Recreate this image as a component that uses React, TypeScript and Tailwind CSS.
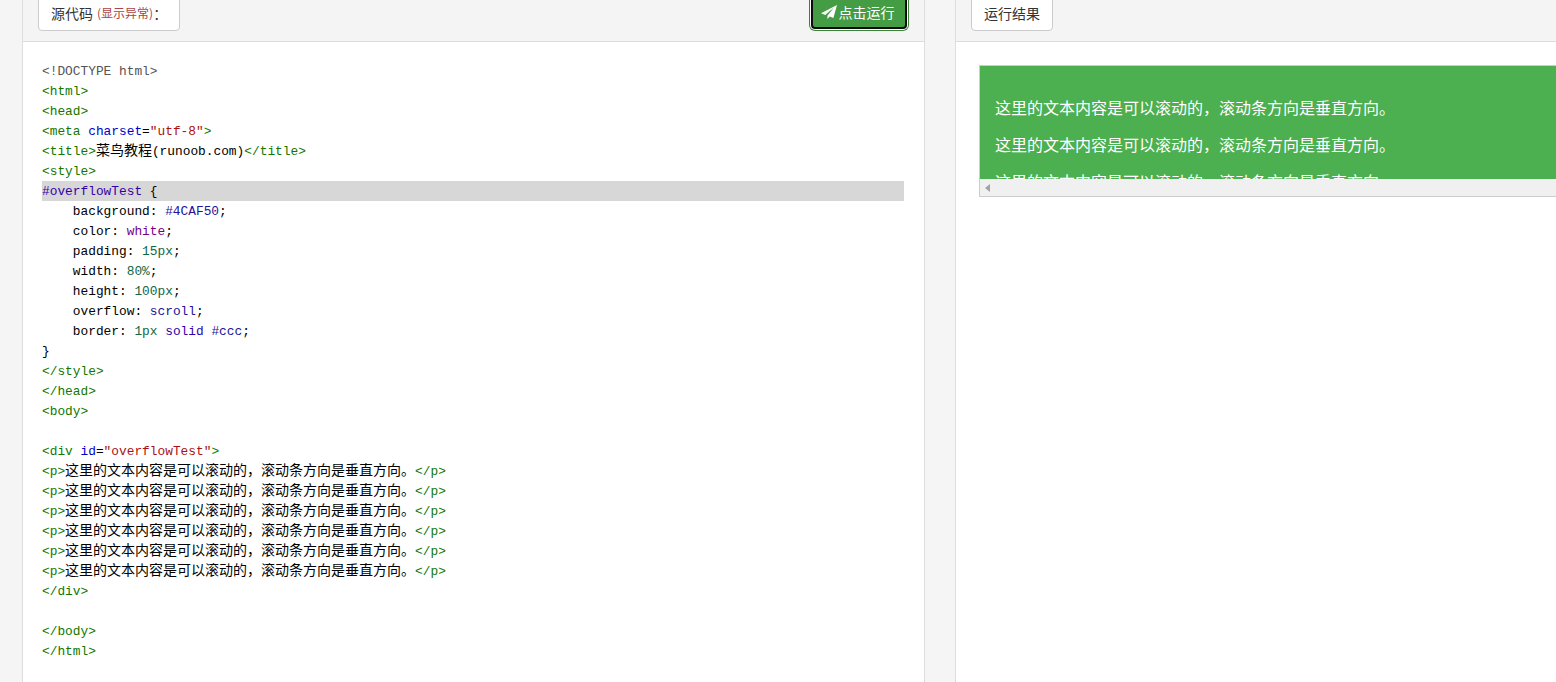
import React from "react";

const cjk = '"Liberation Mono", "Noto Sans CJK SC", monospace';

type Tok = [string, string?];

const TAG = "text-[#117700]";
const ATTR = "text-[#0000cc]";
const STR = "text-[#aa1111]";
const META = "text-[#555555]";
const ATOM = "text-[#221199]";
const KW = "text-[#770088]";
const NUM = "text-[#116644]";
const BUILTIN = "text-[#3300aa]";

const para: Tok[] = [["<p>", TAG], ["这里的文本内容是可以滚动的，滚动条方向是垂直方向。", "cn"], ["</p>", TAG]];

const lines: Tok[][] = [
  [["<!DOCTYPE html>", META]],
  [["<html>", TAG]],
  [["<head>", TAG]],
  [["<meta", TAG], [" "], ["charset", ATTR], ["="], ['"utf-8"', STR], [">", TAG]],
  [["<title>", TAG], ["菜鸟教程", "cn"], ["(runoob.com)"], ["</title>", TAG]],
  [["<style>", TAG]],
  [["#overflowTest", BUILTIN], [" {"]],
  [["    background: "], ["#4CAF50", ATOM], [";"]],
  [["    color: "], ["white", KW], [";"]],
  [["    padding: "], ["15px", NUM], [";"]],
  [["    width: "], ["80%", NUM], [";"]],
  [["    height: "], ["100px", NUM], [";"]],
  [["    overflow: "], ["scroll", ATOM], [";"]],
  [["    border: "], ["1px", NUM], [" "], ["solid", BUILTIN], [" "], ["#ccc", ATOM], [";"]],
  [["}"]],
  [["</style>", TAG]],
  [["</head>", TAG]],
  [["<body>", TAG]],
  [],
  [["<div", TAG], [" "], ["id", ATTR], ["="], ['"overflowTest"', STR], [">", TAG]],
  para,
  para,
  para,
  para,
  para,
  para,
  [["</div>", TAG]],
  [],
  [["</body>", TAG]],
  [["</html>", TAG]],
];

const greenLine = "这里的文本内容是可以滚动的，滚动条方向是垂直方向。";

const CodeLine = ({ toks, active }: { toks: Tok[]; active: boolean }) => (
  <div className={`h-5 leading-[22px] whitespace-pre ${active ? "bg-[#d7d7d7]" : ""}`}>
    {toks.map((t, i) =>
      t[1] === "cn" ? (
        <span key={i} className="text-[14px] leading-none text-black">{t[0]}</span>
      ) : (
        <span key={i} className={t[1] ?? "text-black"}>{t[0]}</span>
      )
    )}
  </div>
);

const TabLabel = ({ children }: { children: React.ReactNode }) => (
  <div className="h-[40px] flex items-end pb-[7px] px-[12px] bg-white border border-[#cccccc] rounded-[4px] text-[14px] leading-5 text-[#333333]">
    {children}
  </div>
);

export default function App() {
  return (
    <div
      className="h-[682px] w-[1556px] overflow-hidden bg-[#f5f5f5] flex pl-[22px]"
      style={{ fontFamily: '"Noto Sans CJK SC", "Liberation Sans", sans-serif' }}
    >
      {/* Source panel */}
      <section className="w-[903px] shrink-0 border-x border-[#dddddd] bg-white flex flex-col">
        <div className="h-[42px] shrink-0 bg-[#f4f4f4] border-b border-[#dddddd] flex items-end justify-between overflow-hidden pb-[10px] pl-[15px] pr-[17px]">
          <TabLabel>
            源代码
            <span className="text-[12px] ml-[4px] text-[#a94442]">(显示异常)</span>
            <span className="w-[14px]">：</span>
          </TabLabel>
          <div className="h-[40px] w-[96px] mb-[2px] bg-[#449d44] border-2 border-[#0c0c0c] rounded-[4px] shadow-[0_0_0_1px_#ffffff,0_0_0_2px_#398439] flex items-end justify-center pb-[5px] text-[14px] leading-5 text-white">
            <svg viewBox="0 0 16 14" className="w-[16px] h-[14px] -ml-[3px] mr-[2px] mb-[3px]" fill="currentColor">
              <path d="M16 0 L0 8.2 L4.2 10 L13 2.6 L6.4 10.8 L6.4 14 L8.8 11.6 L12.4 13 Z" />
            </svg>
            点击运行
          </div>
        </div>
        <div
          className="flex-1 pt-[19px] pl-[19px] pr-[20px] text-[12.83px]"
          style={{ fontFamily: cjk }}
        >
          {lines.map((toks, i) => (
            <CodeLine key={i} toks={toks} active={i === 6} />
          ))}
        </div>
      </section>

      <div className="w-[30px] shrink-0" />

      {/* Result panel */}
      <section className="flex-1 min-w-0 border-l border-[#dddddd] bg-white flex flex-col overflow-hidden">
        <div className="h-[42px] shrink-0 bg-[#f4f4f4] border-b border-[#dddddd] flex items-end overflow-hidden pb-[10px] pl-[15px]">
          <TabLabel>运行结果</TabLabel>
        </div>
        <div className="pt-[23px] pl-[23px]">
          <div className="w-[900px] h-[132px] border border-[#cccccc] flex flex-col">
            <div className="h-[113px] shrink-0 overflow-hidden bg-[#4caf50] text-white text-[16px] leading-[21px] px-[15px] pt-[15px]">
              <p className="my-[16px]">{greenLine}</p>
              <p className="my-[16px]">{greenLine}</p>
              <p className="my-[16px]">{greenLine}</p>
            </div>
            <div className="h-[17px] shrink-0 bg-[#f0f0f0] flex items-center pl-[5px]">
              <svg viewBox="0 0 5 8" className="w-[5px] h-[8px]" fill="#a3a3a3">
                <path d="M5 0 L0 4 L5 8 Z" />
              </svg>
            </div>
          </div>
        </div>
      </section>
    </div>
  );
}
